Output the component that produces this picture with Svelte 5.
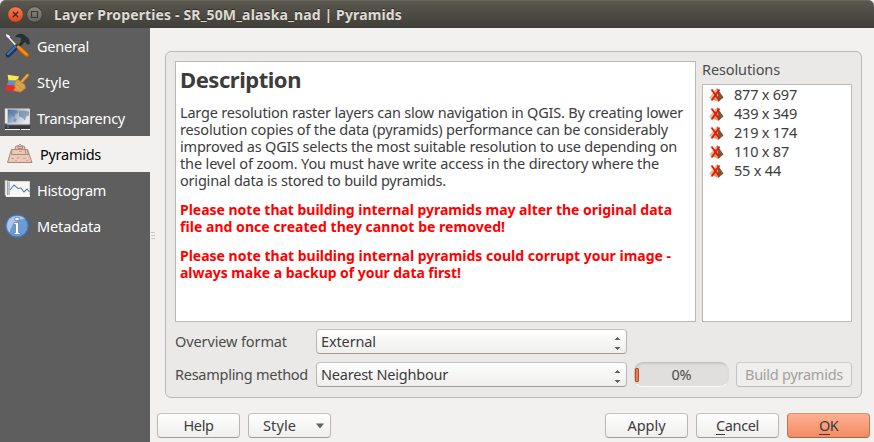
<script>
  const nav = [
    { id: 'general', label: 'General', width: 52 },
    { id: 'style', label: 'Style', width: 33 },
    { id: 'transparency', label: 'Transparency', width: 88 },
    { id: 'pyramids', label: 'Pyramids', width: 61 },
    { id: 'histogram', label: 'Histogram', width: 69 },
    { id: 'metadata', label: 'Metadata', width: 64 }
  ];
  let current = $state('pyramids');

  const paragraphs = [
    {
      warn: false,
      lines: [
        ['Large resolution raster layers can slow navigation in QGIS. By creating lower', 503],
        ['resolution copies of the data (pyramids) performance can be considerably', 488],
        ['improved as QGIS selects the most suitable resolution to use depending on', 497],
        ['the level of zoom. You must have write access in the directory where the', 479],
        ['original data is stored to build pyramids.', 266]
      ]
    },
    {
      warn: true,
      lines: [
        ['Please note that building internal pyramids may alter the original data', 492],
        ['file and once created they cannot be removed!', 325]
      ]
    },
    {
      warn: true,
      lines: [
        ['Please note that building internal pyramids could corrupt your image -', 491],
        ['always make a backup of your data first!', 281]
      ]
    }
  ];

  const resolutions = [
    ['877 x 697', 63],
    ['439 x 349', 63],
    ['219 x 174', 63],
    ['110 x 87', 55],
    ['55 x 44', 47]
  ];

  // Tracks the label so that its text spans the given width.
  function fit(node, width) {
    const natural = node.getBoundingClientRect().width;
    const count = node.textContent.length;
    node.style.letterSpacing = `${(width - natural) / count}px`;
  }
</script>

{#snippet spin()}
  <svg class="spin" width="7" height="14" viewBox="0 0 7 14">
    <path d="M.5 4 3.5 1 6.5 4zM.5 11h6l-3 3z" fill="#5c5b59" />
  </svg>
{/snippet}

<div class="window">
  <header>
    <svg class="controls" width="38" height="18" viewBox="0 0 38 18">
      <defs>
        <linearGradient id="close" x2="0" y2="1"><stop stop-color="#f47d59" /><stop offset="1" stop-color="#de471b" /></linearGradient>
        <linearGradient id="max" x2="0" y2="1"><stop stop-color="#8b887f" /><stop offset="1" stop-color="#66635c" /></linearGradient>
      </defs>
      <circle cx="9.5" cy="8.5" r="7.8" fill="url(#close)" stroke="#4a3a32" stroke-width=".8" />
      <path d="m6.8 5.8 5.4 5.4m0-5.4-5.4 5.4" stroke="#4b2519" stroke-width="1.3" />
      <circle cx="28.5" cy="8.5" r="7.8" fill="url(#max)" stroke="#34322d" stroke-width=".8" />
      <path d="M25.500 5.500h6v6h-6z" fill="none" stroke="#3b3934" stroke-width="1.200" />
    </svg>
    <span class="title" use:fit={348}>Layer Properties - SR_50M_alaska_nad | Pyramids</span>
  </header>

  <div class="body">
    <nav>
      {#each nav as item (item.id)}
        <div class="item" class:active={current === item.id} role="button" tabindex="-1" onclick={() => (current = item.id)} onkeydown={() => {}}>
          <svg width="28" height="28" viewBox="0 0 28 28">
            {#if item.id === 'general'}
              <g transform="translate(.8 1.500) scale(.93)">
                <path d="m3 3 12 13" stroke="#e8e8e8" stroke-width="1.8" stroke-linecap="round" />
                <path d="m1 .5 3 1 2 2-1 1-3-1z" fill="#f5f5f5" />
                <path d="m15 14 7-8" stroke="#222b2c" stroke-width="3" />
                <path d="M11.500 2.500Q16-1 20.500 1L26 6l1 5-3 1-2-3-3 1-2-2 1-3q-3-1-6.500-1.500z" fill="#273132" />
                <path d="m3.500 23 9-8.500" stroke="#18355e" stroke-width="5.500" stroke-linecap="round" />
                <path d="m3.500 22 8-8" stroke="#3e70b0" stroke-width="2.600" stroke-linecap="round" />
                <path d="m15 15 9 8.500" stroke="#c65b00" stroke-width="4.600" stroke-linecap="round" />
                <path d="m14.500 14.500 9 8" stroke="#ff8a0c" stroke-width="2.800" stroke-linecap="round" />
              </g>
            {:else if item.id === 'style'}
              <g transform="translate(1 4) scale(.88)">
                <path d="m3 3 13 2-2 5H4z" fill="#fce94f" />
                <path d="m4 9.500 11 .5 1 6-14-1z" fill="#5f8fce" />
                <path d="m2 14.500 14 2v6L0 21z" fill="#ee2b2b" />
                <path d="m19 11 7-7.500" stroke="#a96a20" stroke-width="4" stroke-linecap="round" />
                <path d="m19 11 6.500-7.500" stroke="#e3ac56" stroke-width="2.400" stroke-linecap="round" />
                <path d="m14 8 8.500 6.500 1 4-6 4.500-8-2 2-3-1-5z" fill="#d69c45" stroke="#b57d32" stroke-width=".8" />
                <path d="m13 12 8 6m-9-2 6 5m-3-11 7 6" stroke="#e6b565" stroke-width=".8" />
              </g>
            {:else if item.id === 'transparency'}
              <defs><linearGradient id="map" x2="1" y2=".5"><stop stop-color="#3763a2" /><stop offset=".55" stop-color="#aebed2" /><stop offset="1" stop-color="#e8e9e8" /></linearGradient></defs>
              <g transform="translate(0 1.500)">
                <path d="M3.500 3.500h22v15h-22z" fill="url(#map)" stroke="#d7dbe0" />
                <path d="M6 7q3-3 7-2l1 2-3 2-1 3-3-3zm9-1 4-1 6 1v4l-3 1-1 4-3-3-3-1zm-5 6 3 2-2 3-2-2z" fill="#5c728e" opacity=".55" />
                <path d="M1 3h2.500v15H1z" fill="#f3f3f1" stroke="#aaa" stroke-width=".6" />
                <path d="M1 20h25v3.500H1z" fill="#34383c" /><path d="M3 20h2v2.500H3z" fill="#3465a4" />
                <path d="M1 24h25" stroke="#f5f5f2" stroke-width="1.200" stroke-dasharray="15 1" />
              </g>
            {:else if item.id === 'pyramids'}
              <path d="m1.500 22.500 4-13H9l.5-3 3-1 1-1h1l1 1 3 1 .5 3h2.500l4.500 13z" fill="#edc8b7" stroke="#a98677" stroke-width="1" />
              <path d="m6 9.500-.5 5h17L21 9.500M9 9.500h10l1 5M12 6.500h4.500v2H12z" fill="none" stroke="#b08a7c" stroke-width="1" />
              <path d="M5 18.500h3m3 0 2-1m4 1h3m-11 2h2m9 0h2m-9-9h3" fill="none" stroke="#cda392" stroke-width="1.100" />
            {:else if item.id === 'histogram'}
              <g transform="translate(0 1)">
                <path d="M4 4.500h21.500v14H4" fill="#f7f7f5" stroke="#d9d9d7" />
                <path d="M1 3.500h2.500v15H1z" fill="#eee" stroke="#a8a8a6" stroke-width=".7" />
                <path d="M2 19h24" stroke="#fff" stroke-width="1.800" />
                <path d="M5 5v13" stroke="#8b8e94" stroke-width="1" />
                <path d="m6 13 4-5 4 3.500 3-.5 3 4 3-3 2.500 3" fill="none" stroke="#6179aa" stroke-width="1.100" />
              </g>
            {:else}
              <circle cx="13" cy="14" r="11.200" fill="#6b9bd2" stroke="#3f70b0" stroke-width="1.200" />
              <path d="M3 14.500Q3 4 13 4q6 0 8 3Q9 6.500 5.500 20.500q-2-2-2.500-6z" fill="#c1d5eb" opacity=".75" />
              <path d="M11 5.500h4v3h-4zM10 10.500h4.500v10H16v2h-6v-2h1.500v-8H10z" fill="#fff" stroke="#476d9a" stroke-width=".6" />
            {/if}
          </svg>
          <span use:fit={item.width}>{item.label}</span>
        </div>
      {/each}
    </nav>

    <div class="splitter"><i></i><i></i><i></i></div>

    <main>
      <section class="group">
        <div class="top">
          <article>
            <h1><span use:fit={121}>Description</span></h1>
            {#each paragraphs as p}
              <p class:warn={p.warn}>
                {#each p.lines as [text, width]}
                  <span class="line"><span use:fit={width}>{text}</span></span>
                {/each}
              </p>
            {/each}
          </article>
          <div class="res">
            <div class="caption"><span use:fit={78}>Resolutions</span></div>
            <ul>
              {#each resolutions as [text, width]}
                <li>
                  <svg width="16" height="16" viewBox="0 0 16 16">
                    <path d="M9 1 15.500 10.500 10 15z" fill="#6e5d36" />
                    <path d="M9 1 1 11l9 4z" fill="#d8c28c" />
                    <path d="m8 4-4 8 6 2z" fill="#bda264" />
                    <path d="m3.500 2.500 8 11m0-11-8 11" stroke="#fa0b05" stroke-width="1.800" />
                  </svg>
                  <span use:fit={width}>{text}</span>
                </li>
              {/each}
            </ul>
          </div>
        </div>
        <div class="row first">
          <label for="format"><span use:fit={112}>Overview format</span></label>
          <div class="button combo" id="format"><span use:fit={55}>External</span>{@render spin()}</div>
        </div>
        <div class="row">
          <label for="method"><span use:fit={133}>Resampling method</span></label>
          <div class="button combo" id="method"><span use:fit={127}>Nearest Neighbour</span>{@render spin()}</div>
          <div class="progress"><i></i><span use:fit={20}>0%</span></div>
          <div class="button build"><span use:fit={98}>Build pyramids</span></div>
        </div>
      </section>

      <footer>
        <div class="button"><span use:fit={30}>Help</span></div>
        <div class="button menu">
          <span use:fit={33}>Style</span>
          <svg width="8" height="6" viewBox="0 0 8 6"><path d="M0 .5h8L4 5.500z" fill="#60605e" /></svg>
        </div>
        <div class="gap"></div>
        <div class="button"><span use:fit={38}>Apply</span></div>
        <div class="button"><span use:fit={43}><u>C</u>ancel</span></div>
        <div class="button ok"><span use:fit={19}><u>O</u>K</span></div>
      </footer>
    </main>
  </div>
</div>

<style>
  :global(body) { background: #f2f1f0; }
  .window {
    width: 874px; height: 442px; overflow: hidden; box-sizing: border-box;
    display: flex; flex-direction: column; background: #f2f1f0; color: #3c3c3c;
    font: 14.5px 'Noto Sans', 'Open Sans', sans-serif; white-space: nowrap;
  }
  .window * { box-sizing: border-box; }
  header {
    height: 28px; flex: none; display: flex; align-items: center; padding-left: 6px; gap: 10px;
    background: linear-gradient(#5b584f, #403e39); border-radius: 6px 6px 0 0;
    box-shadow: inset 0 1px #6a675f; color: #dfdbd2; font-weight: bold; font-size: 14px;
  }
  .title { line-height: 28px; padding-top: 1px; text-shadow: 0 -1px #2c2b28; }
  .controls { margin-top: 1px; }
  .body { display: flex; flex: 1; min-height: 0; }
  nav { width: 150px; background: #5e5e5e; color: #fff; }
  .item { height: 36px; display: flex; align-items: center; padding-left: 4px; gap: 5px; line-height: 36px; }
  .item svg { flex: none; }
  .item.active { background: #f2f1f0; color: #000; padding-left: 6px; gap: 6px; }
  .splitter { width: 7px; padding: 204px 0 0 1px; display: flex; flex-direction: column; gap: 2px; }
  .splitter i { width: 4px; height: 1px; background: #c6c4c1; }
  main { flex: 1; padding-top: 23px; display: flex; flex-direction: column; }
  .group {
    width: 697px; height: 347px; margin-left: 8px; padding: 9px; background: #eae9e7;
    border: 1px solid #bbb9b6; border-radius: 6px;
  }
  .top { display: flex; gap: 6px; height: 261px; }
  article { width: 521px; background: #fff; border: 1px solid #bbb9b3; padding: 4px; }
  h1 { margin: 0 0 11px; font-size: 22px; line-height: 26px; padding-bottom: 1px; font-weight: bold; }
  p { margin: 0 0 12px; line-height: 17px; }
  .warn { color: #f00; font-weight: bold; font-size: 14px; }
  .line { display: block; }
  .res { width: 150px; display: flex; flex-direction: column; }
  .caption { height: 23px; line-height: 17px; color: #4c4c4c; }
  ul { flex: 1; margin: 0; padding: 0; list-style: none; background: #fff; border: 1px solid #bbb9b3; }
  li { height: 19px; line-height: 19px; display: flex; align-items: center; padding-left: 5px; gap: 10px; }
  .row { display: flex; align-items: center; height: 25px; margin-top: 8px; color: #4c4c4c; }
  .row.first { margin-top: 7px; }
  label { width: 141px; line-height: 25px; }
  .button {
    width: 83px; height: 25px; line-height: 23px; display: flex; align-items: center; justify-content: center;
    border: 1px solid #b5b3b0; border-color: #c5c3c0 #b8b6b3 #9d9b98; border-radius: 4px;
    background: linear-gradient(#fefefe, #f0efee); color: #3c3c3c;
  }
  .combo { width: 311px; justify-content: space-between; padding: 0 5px 0 4px; }
  .spin { margin-top: 3px; }
  .progress {
    position: relative; width: 95px; height: 25px; margin: 0 7px; text-align: center; line-height: 23px;
    border: 1px solid #c3c1be; border-bottom-color: #fafafa; border-right-color: #dddbd9;
    border-radius: 9px; background: #e1dfdd; box-shadow: inset 1px 1px 2px #cac8c5;
  }
  .progress i {
    position: absolute; left: 0; top: 5px; width: 4px; height: 14px;
    border: 1px solid #b7512d; border-radius: 1px; background: #f07746;
  }
  .build { width: 116px; color: #a3a19e; background: #efeeec; border-color: #cfcdca #c6c4c1 #bdbbb8; }
  footer { display: flex; gap: 8px; padding: 15px 4px 0 0; }
  .gap { flex: 1; }
  .menu { justify-content: flex-end; padding-right: 6px; gap: 20px; }
  u { text-decoration: none; border-bottom: 1px solid #3c3c3c; display: inline-block; height: 20px; line-height: 20px; }
  .ok { background: linear-gradient(#fdb092, #f38b61); border-color: #d6937a #bd745b #a7634b; }
</style>
